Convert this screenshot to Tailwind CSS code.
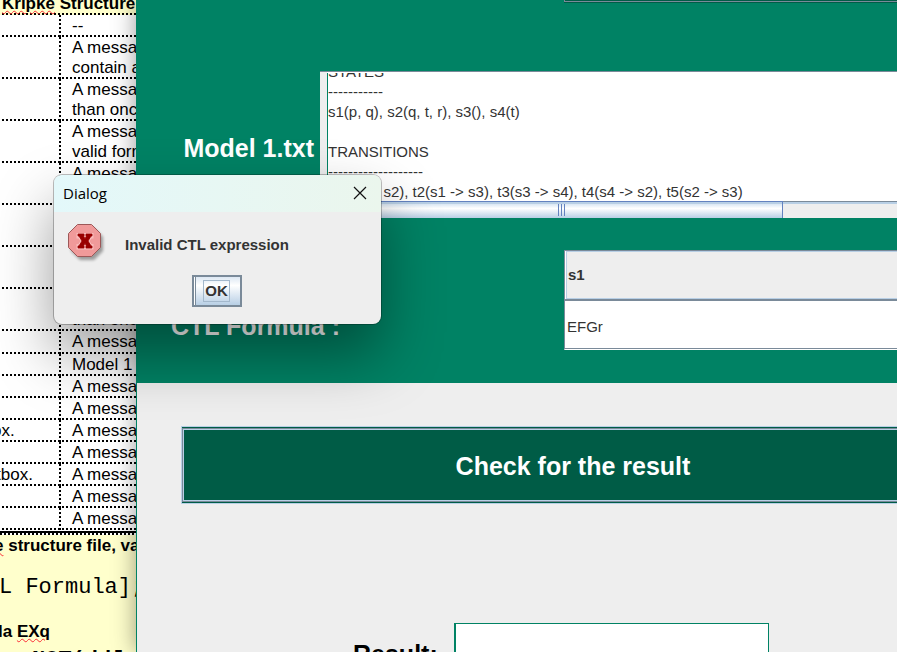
<!DOCTYPE html>
<html lang="en">
<head>
<meta charset="utf-8">
<title>CTL Model Checker</title>
<script src="https://cdn.jsdelivr.net/npm/@tailwindcss/browser@4"></script>
</head>
<body class="relative h-screen overflow-hidden bg-white font-['Liberation_Sans',Arial,sans-serif] text-black">

<!-- Test document in the background -->
<section class="w-[200px] overflow-hidden whitespace-nowrap text-[17px] leading-5" aria-label="Test document">
  <table class="w-full table-fixed border-separate border-spacing-0 [&_td]:p-0 [&_td]:pt-px [&_td]:align-top [&_td:first-child]:bg-[repeating-linear-gradient(90deg,transparent_0_2px,#000_2px_4px),repeating-linear-gradient(0deg,#000_0_2px,transparent_2px_4px)] [&_td:first-child]:bg-[length:100%_2px,2px_100%] [&_td:first-child]:bg-[position:left_bottom,right_bottom] [&_td:first-child]:bg-no-repeat [&_td:last-child]:bg-[repeating-linear-gradient(90deg,transparent_0_1px,#000_1px_3px,transparent_3px_4px)] [&_td:last-child]:bg-[length:100%_2px] [&_td:last-child]:bg-bottom [&_td:last-child]:bg-no-repeat [&_td:last-child]:pl-[11px]">
    <colgroup><col class="w-[61px]"><col></colgroup>
    <thead>
      <tr><th colspan="2" class="h-[15px] bg-[#ffffcc] bg-[repeating-linear-gradient(90deg,transparent_0_2px,#000_2px_4px)] bg-[length:100%_2px] bg-bottom bg-no-repeat p-0 pl-0.5 text-left align-top font-bold"><div class="-mt-1.5 h-[21px]"><span class="underline decoration-red-500 decoration-wavy decoration-1">Kripke</span> Structure</div></th></tr>
    </thead>
    <tbody>
      <tr class="h-[22px]"><td></td><td>--</td></tr>
      <tr class="h-[42px]"><td></td><td>A message<br>contain a</td></tr>
      <tr class="h-[42px]"><td></td><td>A message<br>than once</td></tr>
      <tr class="h-[42px]"><td></td><td>A message<br>valid form</td></tr>
      <tr class="h-[42px]"><td></td><td>A message</td></tr>
      <tr class="h-[42px]"><td></td><td></td></tr>
      <tr class="h-[42px]"><td></td><td></td></tr>
      <tr class="h-[42px]"><td></td><td><br>than once</td></tr>
      <tr class="h-[23px]"><td></td><td>A message</td></tr>
      <tr class="h-[22px]"><td></td><td>Model 1</td></tr>
      <tr class="h-[22px]"><td></td><td>A message</td></tr>
      <tr class="h-[22px]"><td></td><td>A message</td></tr>
      <tr class="h-[22px]"><td><div class="-ml-2">ox.</div></td><td>A message</td></tr>
      <tr class="h-[22px]"><td></td><td>A message</td></tr>
      <tr class="h-[22px]"><td><div class="-ml-1">tbox.</div></td><td>A message</td></tr>
      <tr class="h-[22px]"><td></td><td>A message</td></tr>
      <tr class="h-[22px]"><td></td><td>A message</td></tr>
    </tbody>
  </table>
  <div class="mt-px h-1 border-t-2 border-black bg-[repeating-linear-gradient(90deg,#000_0_2px,#fff_2px_4px)]"></div>
  <div class="bg-[#ffffcc] pt-px font-bold">
    <p class="-ml-1.5"><span class="underline decoration-red-500 decoration-wavy decoration-1">e</span> structure file, valid</p>
    <p class="-ml-px mt-5 h-6 font-['Liberation_Mono','Courier_New',monospace] text-[22px] font-normal leading-6">L Formula];</p>
    <p class="-ml-0.5 mt-[22px]">la <span class="underline decoration-red-500 decoration-wavy decoration-1">EXq</span></p>
    <p class="ml-8 mt-[7px] h-6 font-['Liberation_Mono','Courier_New',monospace] text-[22px] leading-6">NOT(dd[</p>
  </div>
</section>

<!-- Application window -->
<main class="absolute inset-y-0 left-[136px] -right-28 flex flex-col overflow-hidden border-l border-[#008264] bg-[#eeeeee] shadow-[0_0_22px_rgba(0,0,0,0.4)]">
  <form class="contents">
    <div class="shrink-0 bg-[#008264] pb-[33px]">
      <div class="ml-[427px] h-[3px] border-b border-[#005c46] bg-[#005c46] shadow-[inset_1px_-1px_0_#7a8a99]"></div>

      <div class="mt-[68px] flex h-[147px] text-white">
        <label for="model" class="w-[183px] pr-1.5 pt-[63px] text-right text-[25px] font-bold leading-7">Model 1.txt</label>
        <div class="flex flex-1 flex-col border-t border-[#7a8a99] bg-white">
          <div class="flex h-[129px] border-l-[7px] border-[#eeeeee]">
            <div class="mt-px flex flex-1 flex-col overflow-hidden border-l border-[#008264]">
              <textarea id="model" rows="7" readonly class="-mt-[11px] block h-[140px] w-full shrink-0 resize-none overflow-hidden whitespace-pre bg-white text-[15px] leading-5 text-[#333] outline-none">STATES
-----------
s1(p, q), s2(q, t, r), s3(), s4(t)

TRANSITIONS
-------------------
t1(s1 -> s2), t2(s1 -> s3), t3(s3 -> s4), t4(s4 -> s2), t5(s2 -> s3)</textarea>
            </div>
          </div>
          <div class="flex h-[17px] border-t border-[#7a8a99] bg-[#eeeeee] shadow-[inset_0_2px_0_#b8cfe5]">
            <div class="-mt-px flex w-[463px] items-center justify-center gap-0.5 border-r border-t border-[#6382bf] bg-linear-to-b from-[#c8dbee] via-white via-40% to-[#b8cfe5] pl-5 shadow-[inset_0_2px_0_#b8cfe5]">
              <i class="h-3 w-px bg-[#6382bf]"></i><i class="h-3 w-px bg-[#6382bf]"></i><i class="h-3 w-px bg-[#6382bf]"></i>
            </div>
          </div>
        </div>
      </div>

      <div class="mt-8 grid grid-cols-[393px_1fr] pl-[34px] text-[15px] text-[#333]">
        <select id="state" aria-label="Initial state" class="col-start-2 h-[50px] appearance-none border border-[#7a8a99] bg-[#eeeeee] pl-[3px] font-bold shadow-[inset_1px_0_0_#ffffff,inset_2px_1px_0_#b8cfe5,inset_0_-1px_0_#b8cfe5] outline-none"><option>s1</option></select>
        <label for="formula" class="pt-3 text-[25px] font-bold leading-7 text-white">CTL Formula :</label>
        <input id="formula" value="EFGr" class="h-[50px] border border-b-white border-l-[#7a8a99] border-t-[#7a8a99] bg-white pb-0 pl-0.5 pt-0.5 shadow-[inset_0_-1px_0_#7a8a99] outline-none">
      </div>
    </div>

    <button type="button" class="mx-11 mt-[43px] h-[78px] shrink-0 border border-[#b8cfe5] bg-[#005c46] pt-1 text-[25px] font-bold text-white shadow-[inset_0_1px_0_#005c46,inset_0_-1px_0_#005c46,inset_1px_2px_0_#7a8a99,inset_-1px_-2px_0_#7a8a99,inset_2px_3px_0_#b8cfe5,inset_-2px_-3px_0_#b8cfe5]">Check for the result</button>

    <div class="ml-[216px] mt-[119px] flex shrink-0 gap-4">
      <label for="result" class="pt-[17px] text-[25px] font-bold leading-7">Result:</label>
      <input id="result" readonly class="h-[60px] w-[315px] border border-l-2 border-[#008264] bg-white outline-none">
    </div>
  </form>
</main>

<!-- Error dialog -->
<div role="dialog" aria-labelledby="dlg-title" class="absolute left-[54px] top-[175px] w-[327px] overflow-hidden rounded-lg bg-[#eeeeee] pb-[17px] text-[#333] shadow-[0_0_0_1px_rgba(0,0,0,0.25),0_30px_60px_rgba(0,0,0,0.4)]">
  <header class="flex h-[37px] items-center justify-between bg-linear-to-r from-[#e3f8fa] to-[#ebf6ed] pl-[9px] pr-3.5 text-black">
    <h1 id="dlg-title" class="font-['Open_Sans','Noto_Sans',sans-serif] text-[15px]">Dialog</h1>
    <button type="button" aria-label="Close" class="pb-0.5"><svg class="size-3.5" viewBox="0 0 14 14" fill="none" stroke="#111" stroke-width="1.2"><path d="M1 1l12 12M13 1L1 13"/></svg></button>
  </header>
  <div class="flex h-[63px] items-start pl-3 pt-2.5">
    <svg class="h-11 w-11 shrink-0" viewBox="0 0 44 44">
      <defs><filter id="soft" x="-20%" y="-20%" width="150%" height="150%"><feGaussianBlur stdDeviation="1.5"/></filter></defs>
      <path d="M14 6h14l9 9v14l-9 9H14l-9-9V15z" fill="#000" opacity=".35" filter="url(#soft)"/>
      <path d="M11.500 2.500h14l9 9v14l-9 9h-14l-9-9v-14z" fill="#f09a9a" stroke="#9c5858"/>
      <path d="M10.500 11h17v5.500h-2L23.500 19l2 3h2v5.500h-17V22h2l2-3-2-2.500h-2z" fill="#f9bcbc"/>
      <path d="M12 12h6v2h-.5l1.500 2.800L20.500 14H20v-2h6v2h-1l-3 5 3 5h1v2h-6v-2h.5L19 21.200 17.500 24h.5v2h-6v-2h1l3-5-3-5h-1z" fill="#990000" stroke="#990000" stroke-width=".8"/>
    </svg>
    <p class="ml-[15px] mt-[13px] text-[15px] font-bold leading-5">Invalid CTL expression</p>
  </div>
  <div class="flex justify-center pr-0.5">
    <button type="button" class="h-8 w-[50px] border-2 border-[#7a8a99] bg-linear-to-b from-[#dde8f3] via-white via-30% to-[#b8cfe5] pt-px text-[15px] font-bold shadow-[inset_1px_0_0_#ffffff,inset_2px_0_0_#7a8a99]"><span class="inline-block border border-[#a3b8cc] px-px leading-5">OK</span></button>
  </div>
</div>

</body>
</html>
